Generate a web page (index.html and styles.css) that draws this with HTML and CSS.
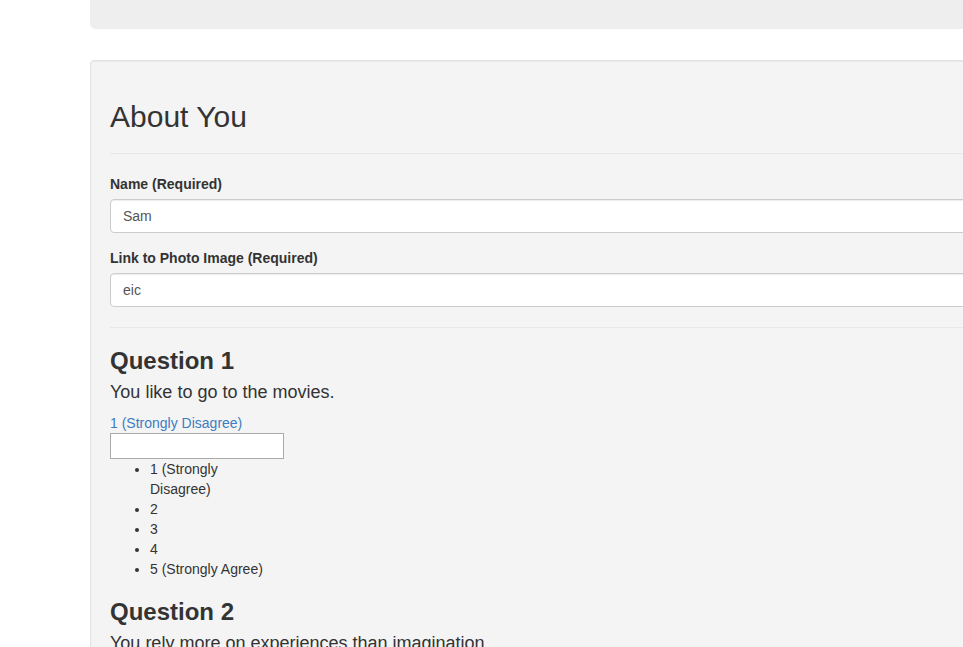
FILE: index.html
```html
<!DOCTYPE html>
<html>
<head>
<meta charset="utf-8">
<link rel="stylesheet" href="styles.css">
</head>
<body>
<div class="container">
  <div class="jumbotron"></div>
  <div class="well">
    <h2 class="title">About You</h2>
    <hr class="rule">
    <div class="form-group">
      <label class="label">Name (Required)</label>
      <div class="input">Sam</div>
    </div>
    <div class="form-group">
      <label class="label">Link to Photo Image (Required)</label>
      <div class="input">eic</div>
    </div>
    <hr class="rule">
    <div class="question">
      <h3 class="q-title">Question 1</h3>
      <h4 class="q-text">You like to go to the movies.</h4>
      <div class="picker">
        <a class="picked">1 (Strongly Disagree)</a>
        <div class="picker-box"></div>
        <ul class="options">
          <li>1 (Strongly Disagree)</li>
          <li>2</li>
          <li>3</li>
          <li>4</li>
          <li>5 (Strongly Agree)</li>
        </ul>
      </div>
    </div>
    <div class="question">
      <h3 class="q-title">Question 2</h3>
      <h4 class="q-text">You rely more on experiences than imagination.</h4>
    </div>
  </div>
</div>
</body>
</html>
```
FILE: styles.css
```css
html, body {
  margin: 0;
  padding: 0;
  overflow: hidden;
  background: #fff;
}
body {
  font-family: "Liberation Sans", Arial, Helvetica, sans-serif;
  font-size: 14px;
  line-height: 20px;
  color: #333;
  width: 963px;
  height: 647px;
}
.container {
  margin-left: 90px;
  width: 1100px;
}
.jumbotron {
  height: 29px;
  background: #eee;
  border-radius: 0 0 6px 6px;
  margin-bottom: 31px;
}
.well {
  background: #f4f4f4;
  border: 1px solid #e3e3e3;
  border-radius: 4px;
  box-shadow: inset 0 1px 1px rgba(0,0,0,.05);
  padding: 19px;
  min-height: 800px;
}
.title {
  font-size: 30px;
  font-weight: 500;
  line-height: 33px;
  margin: 20px 0 20px;
}
.rule {
  border: 0;
  border-top: 1px solid #e8e8e8;
  margin: 20px 0;
  height: 0;
}
.form-group {
  margin-bottom: 15px;
}
.label {
  display: block;
  font-weight: bold;
  margin-bottom: 5px;
}
.input {
  box-sizing: border-box;
  height: 34px;
  padding: 6px 12px;
  color: #555;
  background: #fff;
  border: 1px solid #ccc;
  border-radius: 4px;
  box-shadow: inset 0 1px 1px rgba(0,0,0,.075);
}
.q-title {
  font-size: 24px;
  font-weight: bold;
  line-height: 26px;
  margin: 20px 0 10px;
}
.q-text {
  font-size: 18px;
  font-weight: normal;
  line-height: 17px;
  margin: 10px 0 13px;
}
.picker {
  width: 174px;
}
.picked {
  display: block;
  color: #3f7bbf;
  line-height: 19px;
}
.picker-box {
  box-sizing: border-box;
  height: 26px;
  background: #fff;
  border: 1px solid #aaa;
}
.options {
  margin: 0 0 10px;
  padding: 0 10px 0 40px;
  list-style: disc;
}
.options li {
  line-height: 20px;
}
```
